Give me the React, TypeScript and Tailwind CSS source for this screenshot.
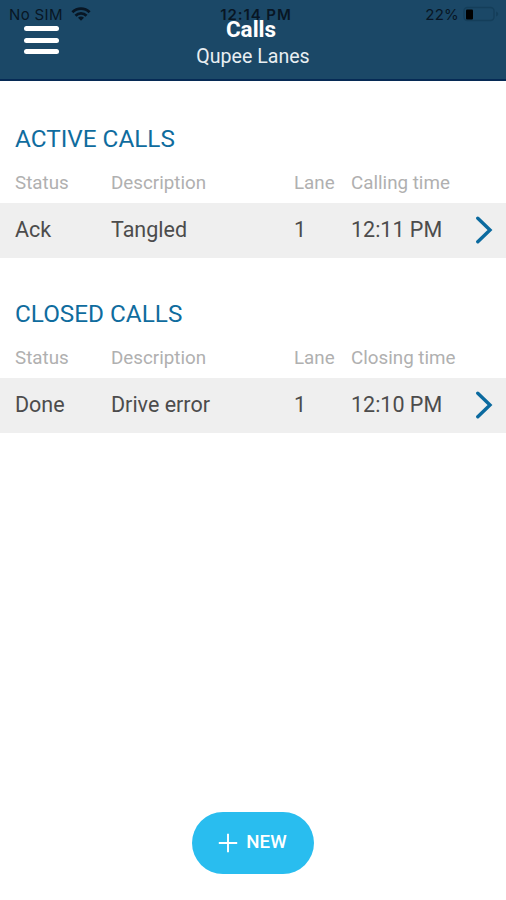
interface Call {
  id: number
  status: string
  description: string
  lane: number
  time: string
}

interface CallSectionProps {
  title: string
  timeLabel: string
  calls: Call[]
}

const activeCalls: Call[] = [
  { id: 1, status: 'Ack', description: 'Tangled', lane: 1, time: '12:11 PM' }
]

const closedCalls: Call[] = [
  { id: 2, status: 'Done', description: 'Drive error', lane: 1, time: '12:10 PM' }
]

function StatusBar() {
  return (
    <div
      className="absolute inset-x-0 top-0 h-7 pl-[9px] pr-[7px] grid grid-cols-3 items-center
                 font-['Inter',sans-serif] text-[15px] leading-none text-[#081624]"
    >
      <div className="flex items-center gap-2">
        <span className="tracking-[0.35px]">No SIM</span>
        <svg viewBox="0 0 20 14" className="w-5 h-3.5" fill="none" stroke="currentColor" strokeWidth="2.8">
          <path d="M1.4 5.2a12.2 12.2 0 0 1 17.2 0" />
          <path d="M4.5 8.7a7.8 7.8 0 0 1 11 0" />
          <path d="M10 13.8 7 10.8a4.2 4.2 0 0 1 6 0Z" fill="currentColor" stroke="none" />
        </svg>
      </div>
      <span className="justify-self-center pl-1 font-semibold tracking-[0.9px] whitespace-nowrap">12:14 PM</span>
      <div className="flex items-center justify-end gap-1">
        <span className="tracking-[0.2px]">22%</span>
        <svg viewBox="0 0 36 16" className="w-9 h-4">
          <rect x="1" y="1.5" width="30" height="13" rx="3.5" fill="none" stroke="#143e5a" strokeWidth="1.4" />
          <rect x="3" y="3.5" width="7" height="10" rx="1" fill="#000000" />
          <path d="M33 5.5v5c1.6-.6 2.2-1.5 2.2-2.5S34.6 6.1 33 5.5Z" fill="#143e5a" />
        </svg>
      </div>
    </div>
  )
}

function Header() {
  return (
    <header className="relative h-[81px] px-6 grid grid-cols-3 bg-[#1b4867] border-b-2 border-[#062a55] text-white">
      <StatusBar />
      <button aria-label="Menu" className="relative mt-[26px] w-[35px] h-7 flex flex-col justify-between">
        <span className="w-full h-[5px] rounded-full bg-white" />
        <span className="w-full h-[5px] rounded-full bg-white" />
        <span className="w-full h-[5px] rounded-full bg-white" />
      </button>
      <div className="relative pt-4 text-center whitespace-nowrap">
        <h1 className="text-[22.5px] leading-[27px] font-bold -ml-1">Calls</h1>
        <p className="text-[19.6px] leading-7 text-[#e8eef2]">Qupee Lanes</p>
      </div>
    </header>
  )
}

function CallSection({ title, timeLabel, calls }: CallSectionProps) {
  return (
    <section>
      <h2 className="pl-[15px] text-[24.3px] leading-7 text-[#0f6c9e]">{title}</h2>
      <div
        className="mt-4 h-7 pl-[15px] grid grid-cols-[96px_183px_57px_1fr] items-center
                   text-[18.8px] text-[#b0b0b0]"
      >
        <span>Status</span>
        <span>Description</span>
        <span>Lane</span>
        <span>{timeLabel}</span>
      </div>
      {calls.map((call) => (
        <div
          key={call.id}
          className="mt-1.5 h-[54.5px] pl-[15px] pr-[13px] grid grid-cols-[96px_183px_57px_1fr_18px]
                     items-center bg-[#efefef] text-[21.5px] text-[#4c4c4c]"
        >
          <span>{call.status}</span>
          <span>{call.description}</span>
          <span>{call.lane}</span>
          <span>{call.time}</span>
          <svg viewBox="0 0 18 28" className="w-[18px] h-7" fill="none" stroke="#0b6a9f" strokeWidth="3.4">
            <path d="M2.8 2.2 15 14 2.8 25.800" strokeLinecap="round" />
          </svg>
        </div>
      ))}
    </section>
  )
}

export default function App() {
  return (
    <div className="w-[506px] h-[900px] flex flex-col bg-white font-['Roboto',sans-serif] overflow-hidden">
      <Header />
      <main className="flex-1 pt-11 flex flex-col gap-[42.7px]">
        <CallSection title="ACTIVE CALLS" timeLabel="Calling time" calls={activeCalls} />
        <CallSection title="CLOSED CALLS" timeLabel="Closing time" calls={closedCalls} />
      </main>
      <div className="pb-[26px] flex justify-center">
        <button
          className="w-[122px] h-[62px] pb-px pr-px rounded-full bg-[#29bdef] text-white text-[18.7px] font-medium
                     flex items-center justify-center gap-2"
        >
          <svg viewBox="0 0 20 20" className="w-5 h-5" stroke="currentColor" strokeWidth="1.9">
            <path d="M10 .8v18.4M.8 10h18.4" />
          </svg>
          NEW
        </button>
      </div>
    </div>
  )
}
